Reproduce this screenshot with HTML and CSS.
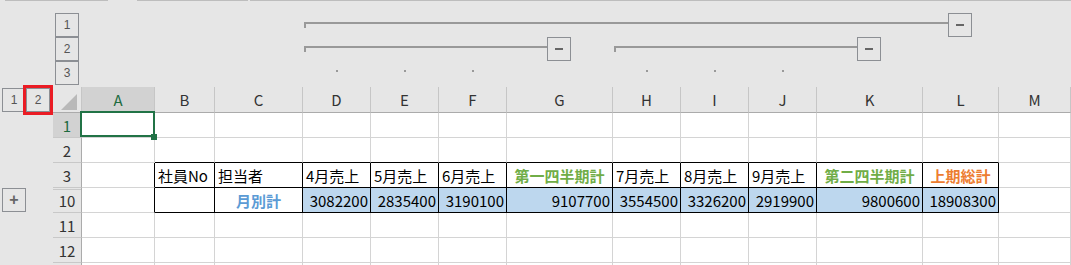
FILE: index.html
```html
<!DOCTYPE html>
<html lang="ja">
<head>
    <meta charset="UTF-8">
    <meta name="viewport" content="width=device-width, initial-scale=1.0">
    <title>上期売上 - グループ化</title>
    <link rel="stylesheet" href="styles.css">
</head>
<body>

    <!-- edge of the ribbon above the sheet -->
    <div class="ribbon-edge">
        <span class="seg seg-1"></span>
        <span class="seg seg-2"></span>
        <span class="seg seg-3"></span>
    </div>

    <!-- Column outline (grouping) -->
    <div class="outline">
        <div class="level-btn lv-1">1</div>
        <div class="bar bar-total">
            <div class="bar-line"></div>
            <div class="toggle end-l"><span class="minus"></span></div>
        </div>

        <div class="level-btn lv-2">2</div>
        <div class="bar bar-q1">
            <div class="bar-line"></div>
            <div class="toggle end-k"><span class="minus"></span></div>
        </div>
        <div class="bar bar-q2">
            <div class="bar-line"></div>
            <div class="toggle end-k"><span class="minus"></span></div>
        </div>

        <div class="level-btn lv-3">3</div>
        <span class="dot col-d"></span>
        <span class="dot col-e"></span>
        <span class="dot col-f"></span>
        <span class="dot col-h"></span>
        <span class="dot col-i"></span>
        <span class="dot col-j"></span>
    </div>

    <!-- Sheet -->
    <div class="sheet">
        <div class="row head-row">
            <div class="gutter gutter-head">
                <div class="level-btn">1</div>
                <div class="level-btn picked">2</div>
            </div>
            <div class="corner"><span class="tri"></span></div>
            <div class="ch active">A</div>
            <div class="ch">B</div>
            <div class="ch">C</div>
            <div class="ch">D</div>
            <div class="ch">E</div>
            <div class="ch">F</div>
            <div class="ch">G</div>
            <div class="ch">H</div>
            <div class="ch">I</div>
            <div class="ch">J</div>
            <div class="ch">K</div>
            <div class="ch">L</div>
            <div class="ch">M</div>
        </div>

        <div class="row">
            <div class="gutter"></div>
            <div class="rh active">1</div>
            <div class="c sel"></div>
            <div class="c"></div><div class="c"></div><div class="c"></div><div class="c"></div>
            <div class="c"></div><div class="c"></div><div class="c"></div><div class="c"></div>
            <div class="c"></div><div class="c"></div><div class="c"></div><div class="c"></div>
        </div>

        <div class="row">
            <div class="gutter"></div>
            <div class="rh">2</div>
            <div class="c"></div>
            <div class="c edge-b"></div><div class="c edge-b"></div><div class="c edge-b"></div>
            <div class="c edge-b"></div><div class="c edge-b"></div><div class="c edge-b"></div>
            <div class="c edge-b"></div><div class="c edge-b"></div><div class="c edge-b"></div>
            <div class="c edge-b"></div><div class="c edge-b"></div>
            <div class="c"></div>
        </div>

        <div class="row">
            <div class="gutter"></div>
            <div class="rh">3</div>
            <div class="c edge-r"></div>
            <div class="c box txt">社員No</div>
            <div class="c box txt">担当者</div>
            <div class="c box txt">4月売上</div>
            <div class="c box txt">5月売上</div>
            <div class="c box txt">6月売上</div>
            <div class="c box ctr quarter">第一四半期計</div>
            <div class="c box txt">7月売上</div>
            <div class="c box txt">8月売上</div>
            <div class="c box txt">9月売上</div>
            <div class="c box ctr quarter">第二四半期計</div>
            <div class="c box ctr total">上期総計</div>
            <div class="c"></div>
        </div>

        <div class="row">
            <div class="gutter"><div class="level-btn plus">+</div></div>
            <div class="rh grouped">10</div>
            <div class="c edge-r"></div>
            <div class="c box"></div>
            <div class="c box ctr month">月別計</div>
            <div class="c box num fill">3082200</div>
            <div class="c box num fill">2835400</div>
            <div class="c box num fill">3190100</div>
            <div class="c box num fill">9107700</div>
            <div class="c box num fill">3554500</div>
            <div class="c box num fill">3326200</div>
            <div class="c box num fill">2919900</div>
            <div class="c box num fill">9800600</div>
            <div class="c box num fill">18908300</div>
            <div class="c"></div>
        </div>

        <div class="row">
            <div class="gutter"></div>
            <div class="rh">11</div>
            <div class="c"></div><div class="c"></div><div class="c"></div><div class="c"></div>
            <div class="c"></div><div class="c"></div><div class="c"></div><div class="c"></div>
            <div class="c"></div><div class="c"></div><div class="c"></div><div class="c"></div>
            <div class="c"></div>
        </div>

        <div class="row">
            <div class="gutter"></div>
            <div class="rh">12</div>
            <div class="c"></div><div class="c"></div><div class="c"></div><div class="c"></div>
            <div class="c"></div><div class="c"></div><div class="c"></div><div class="c"></div>
            <div class="c"></div><div class="c"></div><div class="c"></div><div class="c"></div>
            <div class="c"></div>
        </div>

        <!-- next row only peeks in at the bottom edge -->
        <div class="row row-peek">
            <div class="gutter"></div>
            <div class="rh"></div>
            <div class="c"></div><div class="c"></div><div class="c"></div><div class="c"></div>
            <div class="c"></div><div class="c"></div><div class="c"></div><div class="c"></div>
            <div class="c"></div><div class="c"></div><div class="c"></div><div class="c"></div>
            <div class="c"></div>
        </div>
    </div>

</body>
</html>
```

FILE: styles.css
```css
/* General */
:root {
    --cols: 53px 29px 73px 60px 88px 68px 68px 68px 106px 68px 68px 68px 106px 76px 1fr;
}

* {
    box-sizing: border-box;
}

body {
    margin: 0;
    height: 265px;
    overflow: hidden;
    background-color: #e6e6e6;
    font-family: "Noto Sans CJK JP", "Noto Sans", sans-serif;
    font-size: 15px;
    color: #000;
}

/* Ribbon edge */
.ribbon-edge {
    display: flex;
    height: 13px;
}

.seg {
    height: 1px;
    background-color: #bdbdbd;
}

.seg-1 { margin-left: 5px; width: 103px; }
.seg-2 { margin-left: 29px; width: 111px; }
.seg-3 { margin-left: 2px; flex: 1; }

/* Outline buttons */
.level-btn {
    width: 24px;
    height: 24px;
    border: 1px solid #8c8f94;
    display: flex;
    align-items: center;
    justify-content: center;
    font-family: "Liberation Sans", sans-serif;
    font-size: 12px;
    color: #555;
}

.level-btn.picked {
    outline: 3px solid #ea1c24;
}

.level-btn.plus {
    font-size: 16px;
    font-weight: bold;
    color: #666;
}

/* Column outline */
.outline {
    display: grid;
    grid-template-columns: var(--cols);
    grid-template-rows: repeat(3, 24px);
    height: 74px;
}

.outline .level-btn {
    grid-column: 2;
    margin-left: 2px;
}

.lv-1 { grid-row: 1; }
.lv-2 { grid-row: 2; }
.lv-3 { grid-row: 3; }

.bar {
    display: flex;
    align-items: flex-start;
}

.bar-total { grid-row: 1; grid-column: 6 / 15; }
.bar-q1 { grid-row: 2; grid-column: 6 / 10; }
.bar-q2 { grid-row: 2; grid-column: 10 / 14; }

.bar-line {
    flex: 1;
    margin-top: 9px;
    margin-left: 1px;
    height: 6px;
    border-top: 2px solid #999;
    border-left: 2px solid #999;
}

.toggle {
    width: 24px;
    height: 24px;
    border: 1px solid #8c8f94;
    display: flex;
    align-items: center;
    justify-content: center;
}

.end-l { margin-right: 27px; }
.end-k { margin-right: 42px; }

.minus {
    width: 8px;
    height: 2px;
    background-color: #666;
}

.dot {
    grid-row: 3;
    width: 2px;
    height: 2px;
    margin-top: 9px;
    justify-self: center;
    background-color: #999;
}

.col-d { grid-column: 6; }
.col-e { grid-column: 7; }
.col-f { grid-column: 8; }
.col-h { grid-column: 10; }
.col-i { grid-column: 11; }
.col-j { grid-column: 12; }

/* Sheet */
.row {
    display: grid;
    grid-template-columns: var(--cols);
    height: 25px;
}

.head-row {
    height: 26px;
}

.gutter {
    display: flex;
    align-items: flex-start;
    padding-left: 2px;
}

.gutter-head {
    padding-top: 1px;
}

.corner {
    display: flex;
    align-items: flex-end;
    justify-content: flex-end;
    padding: 0 4px 2px 0;
    border-right: 1px solid #c6c6c6;
    border-bottom: 1px solid #ababab;
}

.tri {
    width: 0;
    height: 0;
    border-left: 16px solid transparent;
    border-bottom: 16px solid #b9b9b9;
}

.ch {
    display: flex;
    align-items: center;
    justify-content: center;
    border-right: 1px solid #c6c6c6;
    border-bottom: 1px solid #ababab;
    color: #333;
}

.rh {
    display: flex;
    align-items: center;
    justify-content: center;
    border-right: 1px solid #ababab;
    border-bottom: 1px solid #c8c8c8;
    color: #333;
}

.ch.active,
.rh.active {
    background-color: #d2d2d2;
    color: #1d6b3f;
}

.rh.grouped {
    box-shadow: inset 0 1px 0 #e6e6e6, inset 0 2px 0 #c8c8c8;
}

.c {
    display: flex;
    align-items: center;
    background-color: #fff;
    border-right: 1px solid #d4d4d4;
    border-bottom: 1px solid #d4d4d4;
    white-space: nowrap;
}

/* Table borders */
.edge-b { border-bottom-color: #000; }
.edge-r { border-right-color: #000; }
.box {
    border-right-color: #000;
    border-bottom-color: #000;
}

.txt { padding: 0 3px; }
.ctr { justify-content: center; }
.num {
    justify-content: flex-end;
    padding-right: 2px;
}

.fill { background-color: #bdd7ee; }

.quarter {
    color: #70ad47;
    font-weight: bold;
}

.total {
    color: #ed7d31;
    font-weight: bold;
}

.month {
    color: #5b9bd5;
    font-weight: bold;
}

/* Active cell */
.sel {
    position: relative;
}

.sel::after {
    content: "";
    position: absolute;
    top: -2px;
    left: -2px;
    right: -1px;
    bottom: 0;
    border: 2px solid #217346;
}

.sel::before {
    content: "";
    position: absolute;
    right: -3px;
    bottom: -3px;
    width: 6px;
    height: 6px;
    background-color: #217346;
    z-index: 1;
}
```
